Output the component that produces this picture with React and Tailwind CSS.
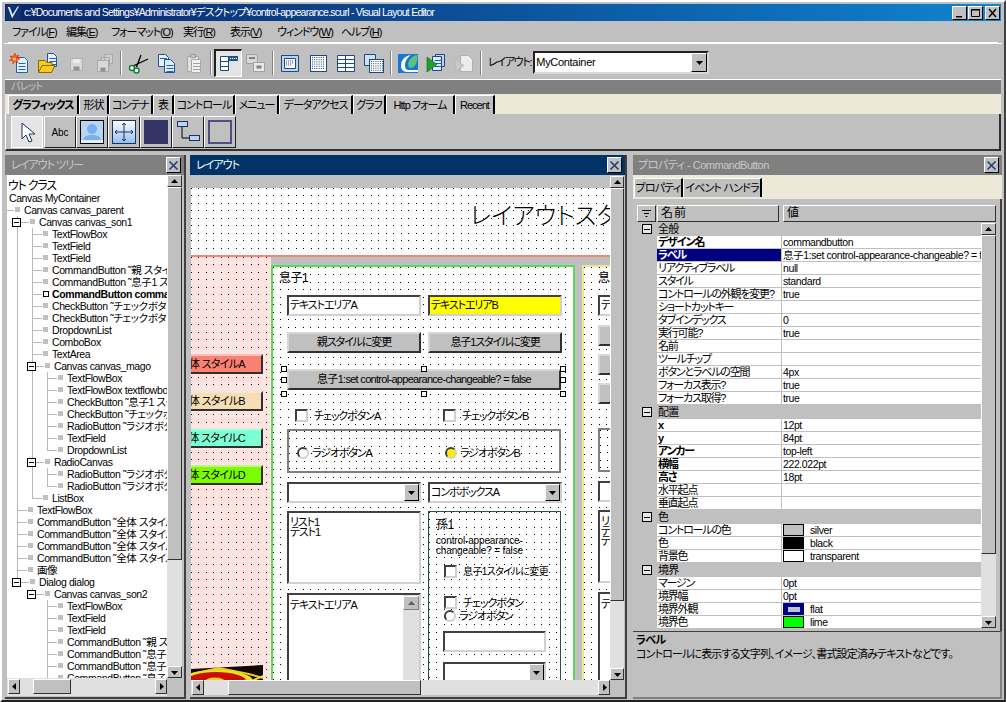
import React from 'react'

const dots = 'bg-black bg-[linear-gradient(90deg,transparent_1px,#fff_1px,#fff_7px,transparent_7px,transparent_8px,#fff_8px),linear-gradient(transparent_1px,#fff_1px,#fff_7px,transparent_7px,transparent_8px,#fff_8px)] [background-size:15px_15px]'
const dotsPink = 'bg-black bg-[linear-gradient(90deg,transparent_1px,#ffe4e1_1px,#ffe4e1_7px,transparent_7px,transparent_8px,#ffe4e1_8px),linear-gradient(transparent_1px,#ffe4e1_1px,#ffe4e1_7px,transparent_7px,transparent_8px,#ffe4e1_8px)] [background-size:15px_15px]'
const raised = 'border border-t-white border-l-white border-r-[#303030] border-b-[#303030] bg-[#c0c0c0]'
const sunken = 'border-2 border-t-[#404040] border-l-[#404040] border-r-[#d0d0d0] border-b-[#d0d0d0]'

function Arrow({ dir = 'down', className = 'w-[7px] h-[7px]' }) {
  const pts = { down: '0,2 7,2 3.5,6', up: '0,5 7,5 3.5,1', left: '5,0 5,7 1,3.5', right: '2,0 2,7 6,3.5' }
  return (
    <svg viewBox="0 0 7 7" className={className}>
      <polygon points={pts[dir]} fill="#000" />
    </svg>
  )
}

function ScrollBtn({ dir, className = '' }) {
  return (
    <div className={`${raised} flex items-center justify-center shrink-0 ${className}`}>
      <Arrow dir={dir} />
    </div>
  )
}

function VScroll({ thumb, track, className = '' }) {
  return (
    <div className={`flex flex-col bg-[#e0e0e0] ${className}`}>
      <ScrollBtn dir="up" className="h-[12px]" />
      <div className={`${raised} shrink-0 ${thumb}`} />
      <div className={track} />
      <ScrollBtn dir="down" className="h-[12px]" />
    </div>
  )
}

function CloseBtn() {
  return (
    <div className="w-[15px] h-[16px] bg-[#c0c0c0] border border-t-white border-l-white border-r-black border-b-black flex items-center justify-center">
      <svg viewBox="0 0 11 11" className="w-[11px] h-[11px]">
        <path d="M1.5 1.5 L9.5 9.5 M9.5 1.5 L1.5 9.5" stroke="#1f3f6f" strokeWidth="1.6" />
      </svg>
    </div>
  )
}

function CaptionBtn({ children }) {
  return (
    <div className="w-[15px] h-[14px] bg-[#c0c0c0] border border-t-white border-l-white border-r-black border-b-black flex items-center justify-center">
      <svg viewBox="0 0 11 10" className="w-[11px] h-[10px]">{children}</svg>
    </div>
  )
}

const I = ({ children, w = 22, h = 22 }) => (
  <svg viewBox="0 0 22 22" width={w} height={h} className="shrink-0">
    {children}
  </svg>
)

const docLines = (x, y, n, c = '#2060c0') =>
  Array.from({ length: n }, (_, i) => <path key={i} d={`M${x} ${y + i * 3}h7`} stroke={c} />)

const IconNew = () => (
  <I>
    <path d="M7.500 5.500h8l3 3v12h-11z" fill="#e8f2ff" stroke="#2060b0" />
    {docLines(9.500, 11.500, 3)}
    <path d="M6 1l1 3 3-1-2 3 3 1-3 1 1 3-3-2-2 3-.5-3.500L0 8.500l3-1.500L1 4l3 .5z" fill="#ff5a10" stroke="#e02000" strokeWidth=".5" />
    <circle cx="5.500" cy="7" r="1.500" fill="#ffe080" />
  </I>
)
const IconOpen = () => (
  <I>
    <path d="M10.500 1.500h6l3 3v10h-9z" fill="#e8f2ff" stroke="#2050a0" />
    {docLines(12.500, 6.500, 3)}
    <path d="M1.500 8.500h7l1.500 2h5v3h3l-3.500 7h-13z" fill="#f8c828" stroke="#906800" />
    <path d="M1.500 20.500l3.500-7h13" fill="none" stroke="#906800" />
  </I>
)
const IconSave = () => (
  <I>
    <path d="M5.500 6.500h12v12h-12z" fill="#d8d8d8" stroke="#b0b0b0" />
    <path d="M8 7h7v4H8z" fill="#ececec" />
    <path d="M8.500 14.500h6v4h-6z" fill="#909090" />
  </I>
)
const IconSaveAll = () => (
  <I>
    <path d="M11.500 2.500h8v9h-8zM8.500 5.500h8v9h-8z" fill="#d0d0d0" stroke="#a8a8a8" />
    <path d="M4.500 8.500h11v11h-11z" fill="#d8d8d8" stroke="#a8a8a8" />
    <path d="M7.500 15.500h5v4h-5z" fill="#909090" />
  </I>
)
const IconCut = () => (
  <I>
    <path d="M21 7L6 14M14 3L9.500 15" stroke="#000" strokeWidth="1.300" fill="none" />
    <circle cx="5" cy="16" r="2.500" fill="#fff" stroke="#108030" strokeWidth="1.400" />
    <circle cx="9.500" cy="18.500" r="2.500" fill="#fff" stroke="#108030" strokeWidth="1.400" />
  </I>
)
const IconCopy = () => (
  <I>
    <path d="M3.500 2.500h7l3 3v9h-10z" fill="#e8f2ff" stroke="#2050a0" />
    <path d="M9.500 7.500h6l4 4v9h-10z" fill="#e0ecff" stroke="#2050a0" />
    {docLines(11.500, 13.500, 3)}
    {docLines(5, 6.500, 1)}
  </I>
)
const IconPaste = () => (
  <I>
    <path d="M4.500 4.500h11v15h-11z" fill="#e0e0e0" stroke="#a8a8a8" />
    <path d="M7.500 2.500h5v3h-5z" fill="#c8c8c8" stroke="#989898" />
    <path d="M8.500 7.500h9v13h-9z" fill="#f0f0f0" stroke="#a8a8a8" />
    {docLines(10, 11.500, 3, '#a0a0a0')}
  </I>
)
const IconOutline = () => (
  <I>
    <path d="M2.500 4.500h8v14h-8z" fill="#fff" stroke="#204880" />
    <path d="M2.500 9.500h8M2.500 14.500h8" stroke="#204880" />
    <path d="M10.500 4.500h9v4h-9z" fill="#2060a0" stroke="#204880" />
    <path d="M12 6.500h1M14 6.500h1M16 6.500h1M18 6.500h1" stroke="#fff" />
  </I>
)
const IconBoxes = () => (
  <I>
    <path d="M1.500 2.500h11v9h-11z" fill="#d8d8d8" stroke="#a0a0a0" />
    <path d="M4 5h6v2H4z" fill="#808080" />
    <path d="M8.500 10.500h11v9h-11z" fill="#e8e8e8" stroke="#a0a0a0" />
    <path d="M11.500 13.500h5v3h-5z" fill="#808080" />
  </I>
)
const Grid = ({ x = 3, y = 3, w = 16, h = 16 }) => {
  const out = []
  for (let i = 0; i < 6; i++) for (let j = 0; j < 6; j++) out.push(<rect key={`${i}${j}`} x={x + 2 + i * 2.200} y={y + 2 + j * 2.200} width="1" height="1" fill="#204880" />)
  return (
    <>
      <rect x={x + 0.500} y={y + 0.500} width={w} height={h} fill="#fff" stroke="#204880" />
      {out}
    </>
  )
}
const IconPanel = () => (
  <I>
    <path d="M2.500 3.500h17v16h-17z" fill="#b8d4f0" stroke="#204880" />
    <path d="M5.500 6.500h11v10h-11z" fill="#fff" stroke="#204880" />
    <path d="M7 9h8M7 11h8M7 13h5" stroke="#204880" strokeDasharray="1 1" />
  </I>
)
const IconDots = () => <I><Grid /></I>
const IconTable = () => (
  <I>
    <path d="M2.500 3.500h17v16h-17z" fill="#fff" stroke="#204880" />
    <path d="M2.500 7.500h17M2.500 11.500h17M2.500 15.500h17M10.500 3.500v16" stroke="#204880" />
  </I>
)
const IconOverlap = () => (
  <I>
    <path d="M1.500 2.500h11v11h-11z" fill="#cfe0f8" stroke="#204880" />
    <Grid x={6} y={7} w={14} h={13} />
  </I>
)
const IconCurl = () => (
  <I>
    <path d="M1 2h20v19H1z" fill="#1878d0" />
    <path d="M14 3C7 4 4 9 4 14c0 4 3 6 7 6h10v-2H12c-3 0-4-2-4-5 0-4 3-8 6-10z" fill="#fff" />
    <path d="M20.500 3c0 6-1 12-7 13-3-1-3-5-1-8 2-3 5-5 8-5z" fill="#60c080" />
  </I>
)
const IconRun = () => (
  <I>
    <path d="M10.500 2.500h9v12h-9z" fill="#b8d4f0" stroke="#204880" />
    <path d="M7.500 4.500h9v14h-9z" fill="#e0ecff" stroke="#204880" />
    {docLines(9.500, 8.500, 3)}
    <path d="M2 5l10 7.500L2 20z" fill="#20a030" stroke="#106010" strokeWidth=".6" />
  </I>
)
const IconRunOff = () => (
  <I>
    <path d="M7.500 3.500h8l4 4v12h-12z" fill="#ececec" stroke="#b0b0b0" />
    <path d="M2 7l9 6.500L2 20z" fill="#c8c8c8" stroke="#b0b0b0" strokeWidth=".6" />
  </I>
)

const Sep = () => <div className="w-[2px] h-[24px] border-l border-l-[#808080] border-r border-r-white mx-[2px] shrink-0" />
const ToolBtn = ({ children, on }) => (
  <div className={`w-[28px] h-[28px] flex items-center justify-center shrink-0 ${on ? 'border-t-2 border-l-2 border-t-[#202020] border-l-[#202020] border-r border-b border-r-white border-b-white bg-[#e4e4e4]' : ''}`}>
    {children}
  </div>
)

const menus = [
  ['ファイル', 'F', 54],
  ['編集', 'E', 45],
  ['フォーマット', 'O', 72],
  ['実行', 'R', 47],
  ['表示', 'V', 47],
  ['ウィンドウ', 'W', 64],
  ['ヘルプ', 'H', 50],
]

const paletteTabs = [
  ['グラフィックス', 71, true],
  ['形状', 30],
  ['コンテナ', 44],
  ['表', 21],
  ['コントロール', 61],
  ['メニュー', 44],
  ['データアクセス', 74],
  ['グラフ', 33],
  ['Http フォーム', 69],
  ['Recent', 40],
]

function PaletteButtons() {
  const cell = 'w-[32px] h-[32px] flex items-center justify-center border border-t-white border-l-white border-r-[#202020] border-b-[#202020] shrink-0'
  return (
    <div className="flex h-[37px] pl-[5px] pt-[2px] bg-[#c0c0c0] border-b-2 border-b-[#303030] border-r-2 border-r-[#303030] border-l border-l-white">
      <div className={`${cell} bg-[#e4e4e4] border-t-[#202020] border-l-[#202020] border-r-white border-b-white`}>
        <svg viewBox="0 0 24 24" className="w-[24px] h-[24px]">
          <path d="M7 3v16l4-4 3 7 3-1-3-7h6z" fill="#fff" stroke="#203060" />
        </svg>
      </div>
      <div className={`${cell} bg-[#c0c0c0] text-[10px] ml-[1px]`}>Abc</div>
      <div className={`${cell} bg-[#c0c0c0]`}>
        <svg viewBox="0 0 24 24" className="w-[24px] h-[24px]">
          <rect x=".5" y=".5" width="23" height="23" fill="#b8d4f4" stroke="#000" />
          <circle cx="12" cy="9" r="5" fill="#78aeec" />
          <path d="M3 20c2-5 6-5 9-5s7 0 9 5z" fill="#78aeec" />
          <rect x="1" y="20" width="22" height="3" fill="#e0f0ff" />
        </svg>
      </div>
      <div className={`${cell} bg-[#c0c0c0]`}>
        <svg viewBox="0 0 24 24" className="w-[24px] h-[24px]">
          <defs>
            <linearGradient id="lg" x1="0" y1="0" x2="0" y2="1">
              <stop offset="0" stopColor="#fff" />
              <stop offset="1" stopColor="#90c0f0" />
            </linearGradient>
          </defs>
          <rect x=".5" y=".5" width="23" height="23" fill="url(#lg)" stroke="#203060" />
          <path d="M12 3v18M3 12h18M12 3l-2 2M12 3l2 2M12 21l-2-2M12 21l2-2M3 12l2-2M3 12l2 2M21 12l-2-2M21 12l-2 2" stroke="#203060" fill="none" />
        </svg>
      </div>
      <div className={`${cell} bg-[#c0c0c0]`}>
        <div className="w-[24px] h-[24px] bg-[#333366]" />
      </div>
      <div className={`${cell} bg-[#c0c0c0]`}>
        <svg viewBox="0 0 24 24" className="w-[24px] h-[24px]">
          <path d="M6 6v12h8" fill="none" stroke="#000" />
          <rect x="1.500" y="1.500" width="10" height="5" fill="#b8d4f4" stroke="#203060" />
          <rect x="13.500" y="15.500" width="10" height="5" fill="#b8d4f4" stroke="#203060" />
        </svg>
      </div>
      <div className={`${cell} bg-[#c0c0c0]`}>
        <div className="w-[24px] h-[24px] border-2 border-[#505080] bg-[#c0c0c0]" />
      </div>
    </div>
  )
}

const rows = [
  [0, 'Canvas canvas_parent', 'f'],
  [1, 'Canvas canvas_son1', 'F'],
  [2, 'TextFlowBox'],
  [2, 'TextField'],
  [2, 'TextField'],
  [2, 'CommandButton ˜親 スタイルに変更'],
  [2, 'CommandButton ˜息子1 スタイルに変更'],
  [2, 'CommandButton commandbutton', 'b'],
  [2, 'CheckButton ˜チェックボタンA'],
  [2, 'CheckButton ˜チェックボタンB'],
  [2, 'DropdownList'],
  [2, 'ComboBox'],
  [2, 'TextArea'],
  [2, 'Canvas canvas_mago', 'F'],
  [3, 'TextFlowBox'],
  [3, 'TextFlowBox textflowbox'],
  [3, 'CheckButton ˜息子1 スタイル'],
  [3, 'CheckButton ˜チェックボタン'],
  [3, 'RadioButton ˜ラジオボタン'],
  [3, 'TextField'],
  [3, 'DropdownList'],
  [2, 'RadioCanvas', 'F'],
  [3, 'RadioButton ˜ラジオボタンA'],
  [3, 'RadioButton ˜ラジオボタンB'],
  [2, 'ListBox'],
  [1, 'TextFlowBox'],
  [1, 'CommandButton ˜全体 スタイルA'],
  [1, 'CommandButton ˜全体 スタイルB'],
  [1, 'CommandButton ˜全体 スタイルC'],
  [1, 'CommandButton ˜全体 スタイルD'],
  [1, '画像'],
  [1, 'Dialog dialog', 'F'],
  [2, 'Canvas canvas_son2', 'F'],
  [3, 'TextFlowBox'],
  [3, 'TextField'],
  [3, 'TextField'],
  [3, 'CommandButton ˜親 スタイル'],
  [3, 'CommandButton ˜息子2 スタイル'],
  [3, 'CommandButton ˜息子2 set'],
  [3, 'CommandButton ˜息子2 set'],
]

function continues(i, k) {
  for (let j = i + 1; j < rows.length; j++) {
    if (rows[j][0] <= k) return rows[j][0] === k
  }
  return k === 3
}

function TreeRow({ i }) {
  const [d, text, kind] = rows[i]
  const folder = kind === 'F' || kind === 'f'
  const bold = kind === 'b'
  const sq = 15 * d + 6 + (folder ? 2 : 0)
  const lx = d === 0 ? 0 : 15 * d - 5
  const lines = []
  for (let k = 1; k < d; k++) {
    if (continues(i, k)) lines.push(<span key={k} className="absolute top-0 h-[12px] w-px bg-[#b8b8b8]" style={{ left: 15 * k - 5 }} />)
  }
  return (
    <div className={`relative h-[12px] leading-[12px] whitespace-nowrap ${bold ? 'font-bold' : ''}`} style={{ paddingLeft: sq + 9 }}>
      {lines}
      {d > 0 && <span className={`absolute top-0 w-px bg-[#b8b8b8] ${continues(i, d) ? 'h-[12px]' : 'h-[6px]'}`} style={{ left: lx }} />}
      <span className="absolute top-[6px] h-px bg-[#b8b8b8]" style={{ left: lx, width: sq - lx - 1 }} />
      {kind === 'F' && (
        <span className="absolute top-[2px] w-[9px] h-[9px] border border-black bg-white flex items-center justify-center" style={{ left: lx - 5 }}>
          <span className="w-[5px] h-px bg-black" />
        </span>
      )}
      <span className={`absolute top-[3px] ${bold ? 'w-[6px] h-[6px] border border-black bg-white' : 'w-[5px] h-[5px] bg-[#c0c0c0]'}`} style={{ left: sq }} />
      {text}
    </div>
  )
}

function TreePanel() {
  return (
    <div className="w-[181px] flex flex-col shrink-0 border-r-2 border-r-[#404040] border-b-2 border-b-[#404040]">
      <div className="h-[20px] bg-[#808080] text-[#c8c8c8] flex items-center justify-between pl-[6px] pr-[3px] text-[11px] tracking-[-1px]">
        <span>レイアウト ツリー</span>
        <CloseBtn />
      </div>
      <div className="flex-1 flex flex-col pl-[2px] pr-[1px] pb-[1px] min-h-0">
        <div className="flex flex-1 min-h-0">
          <div className="w-[160px] bg-white overflow-hidden pt-[5px] text-[10.5px] tracking-[-0.4px]">
            <div className="h-[12px] leading-[12px] text-[12px] tracking-[-1.2px] pl-[1px]">ウト クラス</div>
            <div className="h-[12px] leading-[12px] pl-[2px]">Canvas MyContainer</div>
            {rows.map((_, i) => (
              <TreeRow key={i} i={i} />
            ))}
          </div>
          <VScroll className="w-[15px]" thumb="h-[373px]" track="flex-1" />
        </div>
        <div className="flex h-[18px] items-stretch">
          <div className="w-[160px] flex bg-[#e0e0e0] pt-[1px] pb-[2px]">
            <ScrollBtn dir="left" className="w-[12px] ml-[1px]" />
            <div className="w-[13px]" />
            <div className={`${raised} w-[38px]`} />
            <div className="flex-1" />
            <ScrollBtn dir="right" className="w-[12px]" />
          </div>
          <div className="w-[15px] bg-[#c0c0c0]" />
        </div>
      </div>
    </div>
  )
}

const TextBox = ({ w = 'w-[134px]', h = 'h-[21px]', bg = 'bg-white', lead = 'leading-[17px]', children, className = '' }) => (
  <div className={`${w} ${h} ${bg} ${lead} ${sunken} shrink-0 overflow-hidden pl-[1px] whitespace-nowrap ${className}`}>{children}</div>
)

const Btn = ({ w = 'w-[134px]', children, className = '' }) => (
  <div className={`${w} h-[21px] shrink-0 bg-[#c0c0c0] border-2 border-t-[#d8d8d8] border-l-[#d8d8d8] border-r-[#303030] border-b-[#303030] flex items-center justify-center whitespace-nowrap ${className}`}>
    {children}
  </div>
)

const Check = ({ label, className = '' }) => (
  <div className={`flex items-center h-[13px] ${className}`}>
    <span className={`w-[13px] h-[13px] bg-white ${sunken} shrink-0`} />
    <span className="ml-[6px] whitespace-nowrap leading-[12px]">{label}</span>
  </div>
)

const Radio = ({ label, on, className = '' }) => (
  <div className={`flex items-center h-[12px] ${className}`}>
    <span className={`w-[12px] h-[12px] rounded-full border-2 border-t-[#404040] border-l-[#404040] border-r-[#d0d0d0] border-b-[#d0d0d0] shrink-0 ${on ? 'bg-[#ffee00]' : 'bg-white'}`} />
    <span className="ml-[3px] whitespace-nowrap leading-[12px]">{label}</span>
  </div>
)

const Drop = ({ w = 'w-[134px]', h = 'h-[21px]', className = '', children }) => (
  <div className={`${w} ${h} bg-white ${sunken} shrink-0 flex items-stretch pl-[1px] leading-[17px] whitespace-nowrap overflow-hidden ${className}`}>
    <span className="flex-1">{children}</span>
    <div className="w-[15px] bg-[#c0c0c0] border border-t-white border-l-white border-r-black border-b-black flex items-center justify-center">
      <Arrow />
    </div>
  </div>
)

const Handle = ({ className }) => <span className={`absolute w-[6px] h-[6px] bg-white border border-black ${className}`} />

function Son1() {
  return (
    <div className={`w-[304px] h-[500px] shrink-0 mt-[8px] border-2 border-[#5cd85c] ${dots} text-[11px] tracking-[-1.1px]`}>
      <div className="h-[14px] mt-[4px] ml-[6px] text-[12px] leading-[14px] tracking-[-0.5px]">息子1</div>
      <div className="ml-[14px] w-[274px]">
        <div className="flex gap-[7px] mt-[10px]">
          <TextBox>テキストエリアA</TextBox>
          <TextBox bg="bg-[#ffff00]">テキストエリアB</TextBox>
        </div>
        <div className="flex gap-[7px] mt-[16px]">
          <Btn>親スタイルに変更</Btn>
          <Btn>息子1スタイルに変更</Btn>
        </div>
        <div className="relative mt-[16px]">
          <Btn w="w-[274px]" className="tracking-[-0.7px]">息子1:set control-appearance-changeable? = false</Btn>
          <Handle className="-left-[6px] -top-[3px]" />
          <Handle className="left-[134px] -top-[3px]" />
          <Handle className="-right-[5px] -top-[3px]" />
          <Handle className="-left-[6px] top-[8px]" />
          <Handle className="-right-[5px] top-[8px]" />
          <Handle className="-left-[6px] top-[22px]" />
          <Handle className="left-[134px] top-[22px]" />
          <Handle className="-right-[5px] top-[22px]" />
        </div>
        <div className="flex mt-[19px] h-[13px]">
          <Check label="チェックボタンA" className="ml-[8px] w-[148px]" />
          <Check label="チェックボタンB" />
        </div>
        <div className={`mt-[7px] h-[44px] w-[274px] border-2 border-[#808080] ${dots} flex items-center pl-[8px] pt-[3px]`}>
          <Radio label="ラジオボタンA" className="w-[148px]" />
          <Radio label="ラジオボタンB" on />
        </div>
        <div className="flex gap-[7px] mt-[9px]">
          <Drop />
          <Drop>コンボボックスA</Drop>
        </div>
        <div className="flex gap-[7px] mt-[8px]">
          <div className="w-[134px]">
            <TextBox h="h-[73px]" lead="leading-[10px]" className="pt-[4px]">
              リスト1
              <br />
              テスト1
            </TextBox>
            <div className={`mt-[9px] h-[100px] bg-white ${sunken} flex justify-between pl-[1px]`}>
              <span className="pt-[2px]">テキストエリアA</span>
              <div className="w-[16px] bg-[#e0e0e0] flex flex-col">
                <div className="h-[14px] mt-[1px] bg-[#c0c0c0] border border-t-white border-l-white border-r-[#808080] border-b-[#808080] flex items-center justify-center">
                  <Arrow dir="up" className="w-[7px] h-[7px] opacity-50" />
                </div>
              </div>
            </div>
          </div>
          <div className={`w-[134px] h-[180px] border border-[#2f4f4f] ${dots} pl-[7px]`}>
            <div className="mt-[6px] h-[14px] leading-[14px] text-[12px] tracking-[-0.5px]">孫1</div>
            <div className="mt-[4px] leading-[10px] text-[10px] tracking-[-0.15px]">
              control-appearance-
              <br />
              changeable? = false
            </div>
            <Check label="息子1スタイルに変更" className="mt-[9px] ml-[8px] text-[10px] tracking-[-0.6px]" />
            <Check label="チェックボタン" className="mt-[18px] ml-[8px]" />
            <Radio label="ラジオボタン" className="mt-[1px] ml-[8px]" />
            <TextBox w="w-[103px]" className="mt-[9px] ml-[7px]" />
            <Drop w="w-[103px]" className="mt-[10px] ml-[7px]" />
          </div>
        </div>
      </div>
    </div>
  )
}

function Son2() {
  return (
    <div className={`w-[304px] h-[500px] shrink-0 mt-[8px] ml-[7px] border-2 border-[#f0e68c] ${dots} text-[11px] tracking-[-1.1px] pl-[14px]`}>
      <div className="h-[14px] mt-[4px] text-[12px] leading-[14px] tracking-[-0.5px]">息子2</div>
      <TextBox className="mt-[10px]">テキストエリアA</TextBox>
      <Btn className="mt-[9px]">親スタイル</Btn>
      <Btn className="mt-[8px]">息子2</Btn>
      <Btn className="mt-[8px]">息子2</Btn>
      <div className={`mt-[24px] h-[44px] w-[274px] border-2 border-[#808080] ${dots}`} />
      <Drop className="mt-[9px]" />
      <TextBox h="h-[73px]" lead="leading-[10px]" className="mt-[8px] pt-[4px]">
        リスト1
        <br />
        テスト1
        <br />
        テスト2
      </TextBox>
      <TextBox h="h-[100px]" className="mt-[9px] pt-[2px]">テキストエリアA</TextBox>
    </div>
  )
}

const StyleBtn = ({ bg, text, className }) => (
  <div className={`w-[90px] -ml-[18px] h-[20px] ${bg} border-2 border-t-[#f0f0f0]/60 border-l-[#f0f0f0]/60 border-r-[#303030] border-b-[#303030] flex items-center justify-end pr-[16px] whitespace-nowrap ${className}`}>
    {text}
  </div>
)

function DesignCanvas() {
  return (
    <div className="w-[419px] h-[492px] overflow-hidden shrink-0">
      <div className={`h-[67px] ${dots} pl-[279px] pt-[14px] text-[24px] font-light leading-[28px] whitespace-nowrap`}>レイアウトスタイル</div>
      <div className="h-[2px] bg-[#f08878]" />
      <div className="flex">
        <div className={`w-[80px] h-[500px] shrink-0 ${dotsPink} overflow-hidden text-[11px] tracking-[-0.7px]`}>
          <StyleBtn bg="bg-[#fa8072]" text="全体 スタイルA" className="mt-[97px]" />
          <StyleBtn bg="bg-[#f5deb3]" text="全体 スタイルB" className="mt-[17px]" />
          <StyleBtn bg="bg-[#7fffd4]" text="全体 スタイルC" className="mt-[17px]" />
          <StyleBtn bg="bg-[#7cfc00]" text="全体 スタイルD" className="mt-[17px]" />
          <svg viewBox="0 0 72 16" className="w-[72px] h-[16px] mt-[180px] block">
            <path d="M0 4L72 0V16H0z" fill="#100800" />
            <path d="M0 8L28 2l30 6 14 4v2L50 8 24 5 0 10z" fill="#e8d020" />
            <path d="M58 16l14-6v2l-9 4z" fill="#f8e020" />
            <ellipse cx="26" cy="16" rx="36" ry="11" fill="#f0e020" />
            <ellipse cx="25" cy="16" rx="30" ry="9" fill="#c81000" />
            <ellipse cx="24" cy="16.500" rx="10" ry="4" fill="#f0d020" />
          </svg>
        </div>
        <Son1 />
        <Son2 />
      </div>
    </div>
  )
}

function LayoutPanel() {
  return (
    <div className="w-[437px] ml-[4px] flex flex-col shrink-0 border-r-2 border-r-[#404040] border-b-2 border-b-[#404040]">
      <div className="h-[20px] bg-[#003366] text-white flex items-center justify-between pl-[6px] pr-[3px] text-[11px] tracking-[-1px]">
        <span>レイアウト</span>
        <CloseBtn />
      </div>
      <div className="flex flex-1 min-h-0">
        <div className="w-[420px] flex flex-col pl-px">
          <div className="h-[13px] bg-[#c0c0c0] shrink-0" />
          <DesignCanvas />
          <div className="flex h-[15px] bg-[#e0e0e0]">
            <ScrollBtn dir="left" className="w-[12px] ml-px" />
            <div className="w-[24px]" />
            <div className={`${raised} w-[193px]`} />
            <div className="flex-1" />
            <ScrollBtn dir="right" className="w-[12px]" />
          </div>
        </div>
        <div className="flex-1 flex flex-col">
          <VScroll className="w-[14px] h-[504px] mt-px" thumb="h-[413px]" track="flex-1" />
          <div className="flex-1 bg-[#c0c0c0]" />
        </div>
      </div>
    </div>
  )
}

const groups = [
  ['全般', [
    ['デザイン名', 'commandbutton', 'b'],
    ['ラベル', '息子1:set control-appearance-changeable? = false', 's'],
    ['リアクティブラベル', 'null'],
    ['スタイル', 'standard'],
    ['コントロールの外観を変更?', 'true'],
    ['ショートカットキー', ''],
    ['タブインデックス', '0'],
    ['実行可能?', 'true'],
    ['名前', ''],
    ['ツールチップ', ''],
    ['ボタンとラベルの空間', '4px'],
    ['フォーカス表示?', 'true'],
    ['フォーカス取得?', 'true'],
  ]],
  ['配置', [
    ['x', '12pt', 'b'],
    ['y', '84pt', 'b'],
    ['アンカー', 'top-left', 'b'],
    ['横幅', '222.022pt', 'b'],
    ['高さ', '18pt', 'b'],
    ['水平起点', ''],
    ['垂直起点', ''],
  ]],
  ['色', [
    ['コントロールの色', 'silver', '', 'bg-[#c0c0c0] border border-black'],
    ['色', 'black', '', 'bg-black'],
    ['背景色', 'transparent', '', 'bg-white border border-black'],
  ]],
  ['境界', [
    ['マージン', '0pt'],
    ['境界幅', '0pt'],
    ['境界外観', 'flat', '', 'flat'],
    ['境界色', 'lime', '', 'bg-[#00ff00] border border-black'],
  ]],
]

function Swatch({ kind }) {
  if (kind === 'flat') {
    return (
      <span className="w-[21px] h-[13px] bg-[#000080] flex items-center justify-center shrink-0">
        <span className="w-[12px] h-[5px] bg-[#c0c0d8]" />
      </span>
    )
  }
  return <span className={`w-[21px] h-[12px] shrink-0 ${kind}`} />
}

function PropRow({ label, value, kind, swatch }) {
  const sel = kind === 's'
  return (
    <div className="flex h-[13px] leading-[13px] whitespace-nowrap">
      <div className={`w-[124px] overflow-hidden border-b border-b-[#c0c0c0] pl-px h-[13px] shrink-0 tracking-[-1.2px] ${kind === 'b' ? 'font-bold' : ''} ${sel ? 'bg-[#000080] text-white font-bold' : 'bg-white'}`}>
        {label}
      </div>
      <div className="flex-1 min-w-0 overflow-hidden bg-white border-b border-b-[#c0c0c0] border-l border-l-[#c0c0c0] pl-px flex items-center text-[10.5px] tracking-[-0.4px]">
        {swatch ? <Swatch kind={swatch} /> : null}
        <span className={swatch ? 'ml-[6px]' : ''}>{value}</span>
      </div>
    </div>
  )
}

function PropGroup({ name, items }) {
  return (
    <div>
      <div className="h-[14px] bg-[#c0c0c0] flex items-center pl-[5px]">
        <span className="w-[10px] h-[10px] border border-black bg-[#e8e8e8] flex items-center justify-center mr-[6px]">
          <span className="w-[6px] h-px bg-black" />
        </span>
        <span className="tracking-[-0.8px]">{name}</span>
      </div>
      <div className="pl-[20px]">
        {items.map(([l, v, k, s]) => (
          <PropRow key={l} label={l} value={v} kind={k} swatch={s} />
        ))}
      </div>
    </div>
  )
}

function PropPanel() {
  return (
    <div className="flex-1 ml-[6px] flex flex-col min-w-0">
      <div className="h-[20px] bg-[#808080] text-[#c8c8c8] flex items-center justify-between pl-[5px] pr-[3px] text-[11px] shrink-0">
        <span className="tracking-[-0.5px]">プロパティ - CommandButton</span>
        <CloseBtn />
      </div>
      <div className="h-[24px] bg-[#ece9d8] flex items-end pl-[1px] text-[11px] tracking-[-0.8px] shrink-0 pb-[2px] whitespace-nowrap">
        <div className="w-[49px] h-[19px] bg-[#c0c0c0] border-t border-l border-t-white border-l-white border-r-2 border-r-black flex items-center justify-center">プロパティ</div>
        <div className="w-[79px] h-[19px] bg-[#c0c0c0] border-t border-l border-t-white border-l-white border-r-2 border-r-black flex items-center justify-center">イベント ハンドラ</div>
      </div>
      <div className="h-[432px] bg-[#c0c0c0] pl-[4px] pt-[6px] border-r-2 border-r-[#404040] text-[11px] shrink-0">
        <div className="flex h-[17px] w-[359px]">
          <div className={`${raised} w-[19px] flex items-center justify-center mr-px`}>
            <svg viewBox="0 0 9 7" className="w-[9px] h-[7px]">
              <path d="M0 .5h9M2 3.500h5M3.500 6.500h2" stroke="#000" />
            </svg>
          </div>
          <div className={`${raised} w-[122px] pl-[3px] text-[12px] leading-[15px] tracking-[1px]`}>名前</div>
          <div className="w-[4px]" />
          <div className={`${raised} flex-1 pl-[3px] text-[12px] leading-[15px]`}>値</div>
        </div>
        <div className="flex">
          <div className="w-[344px] overflow-hidden">
            {groups.map(([n, items]) => (
              <PropGroup key={n} name={n} items={items} />
            ))}
          </div>
          <VScroll className="w-[15px] h-[405px] mt-px" thumb="h-[319px]" track="flex-1" />
        </div>
      </div>
      <div className="flex-1 bg-[#c0c0c0] border-t border-t-[#404040] border-b-2 border-b-[#808080] border-r-2 border-r-[#808080] pl-[3px] pt-[2px] text-[11px]">
        <div className="font-bold h-[13px] leading-[13px] tracking-[-0.8px]">ラベル</div>
        <div className="mt-px h-[13px] leading-[13px] tracking-[-0.85px] whitespace-nowrap">コントロールに表示する文字列、イメージ、書式設定済みテキストなどです。</div>
      </div>
    </div>
  )
}

export default function App() {
  return (
    <div lang="ja" className="w-[1006px] h-[702px] flex flex-col overflow-hidden bg-[#c0c0c0] text-black text-[11px] [font-family:'Liberation_Sans','Noto_Sans_CJK_JP',sans-serif] [font-feature-settings:'palt'] border-t-2 border-l-2 border-t-white border-l-white border-r-2 border-r-[#404040] border-b-2 border-b-[#202020] p-[2px] pb-[1px]">
      {/* title bar */}
      <div className="h-[17px] shrink-0 flex items-center bg-gradient-to-r from-[#0a246a] to-[#1084d0] ml-[1px] mr-[1px]">
        <svg viewBox="0 0 16 16" className="w-[15px] h-[15px] ml-[1px] shrink-0">
          <rect width="16" height="16" fill="#103070" />
          <path d="M2 2l4.500 12L14 1l-2 1-5 8L4 2z" fill="#e8f8f0" />
        </svg>
        <span className="ml-[3px] text-white text-[10.5px] tracking-[-0.75px] whitespace-nowrap">c:¥Documents and Settings¥Administrator¥デスクトップ¥control-appearance.scurl - Visual Layout Editor</span>
        <div className="ml-auto flex items-center mr-[1px]">
          <CaptionBtn>
            <path d="M2 8h6v1.500H2z" />
          </CaptionBtn>
          <div className="w-px" />
          <CaptionBtn>
            <path d="M1.500 1.500h8v7h-8zM1 2h9" fill="none" stroke="#000" />
          </CaptionBtn>
          <div className="w-[2px]" />
          <CaptionBtn>
            <path d="M2 1l7 8M9 1l-7 8" stroke="#000" strokeWidth="1.500" />
          </CaptionBtn>
        </div>
      </div>

      {/* menu */}
      <div className="h-[22px] shrink-0 flex items-center pl-[4px] pt-[2px] border-b border-b-white mx-[4px] -mb-px text-[11px] tracking-[-1.1px]">
        {menus.map(([t, k, w]) => (
          <div key={t} className="whitespace-nowrap shrink-0" style={{ width: w }}>
            {t}(<u>{k}</u>)
          </div>
        ))}
      </div>

      {/* toolbar */}
      <div className="h-[36px] shrink-0 flex items-center pl-[2px] pt-[2px] border-t border-t-white mt-px">
        <ToolBtn><IconNew /></ToolBtn>
        <ToolBtn><IconOpen /></ToolBtn>
        <ToolBtn><IconSave /></ToolBtn>
        <ToolBtn><IconSaveAll /></ToolBtn>
        <Sep />
        <ToolBtn><IconCut /></ToolBtn>
        <ToolBtn><IconCopy /></ToolBtn>
        <ToolBtn><IconPaste /></ToolBtn>
        <Sep />
        <ToolBtn on><IconOutline /></ToolBtn>
        <ToolBtn><IconBoxes /></ToolBtn>
        <Sep />
        <ToolBtn><IconPanel /></ToolBtn>
        <ToolBtn><IconDots /></ToolBtn>
        <ToolBtn><IconTable /></ToolBtn>
        <ToolBtn><IconOverlap /></ToolBtn>
        <Sep />
        <ToolBtn><IconCurl /></ToolBtn>
        <ToolBtn><IconRun /></ToolBtn>
        <ToolBtn><IconRunOff /></ToolBtn>
        <Sep />
        <span className="ml-[4px] whitespace-nowrap tracking-[-1.3px]">レイアウト:</span>
        <div className="ml-[2px] w-[176px] h-[23px] bg-white border-2 border-t-[#202020] border-l-[#202020] border-r-[#d8d8d8] border-b-[#d8d8d8] flex items-stretch">
          <span className="flex-1 pl-px leading-[19px] tracking-[-0.3px]">MyContainer</span>
          <div className="w-[16px] bg-[#c0c0c0] border border-t-white border-l-white border-r-black border-b-black flex items-center justify-center">
            <Arrow />
          </div>
        </div>
      </div>

      {/* palette */}
      <div className="shrink-0 ml-[1px] mr-[1px] border-t border-t-white">
        <div className="h-[14px] bg-[#808080] text-[#c8c8c8] pl-[6px] text-[10px] tracking-[-0.5px] leading-[14px]">パレット</div>
        <div className="h-[20px] bg-[#ece9d8] flex items-end pl-[3px] text-[11px] tracking-[-1px]">
          {paletteTabs.map(([t, w, on]) => (
            <div key={t} className={`h-[19px] bg-[#c0c0c0] border-t border-t-white border-l border-l-white border-r-2 border-r-black flex items-center justify-center whitespace-nowrap shrink-0 ${on ? 'font-bold' : ''}`} style={{ width: w }}>
              {t}
            </div>
          ))}
        </div>
        <PaletteButtons />
      </div>

      {/* work area */}
      <div className="flex-1 min-h-0 flex mt-[4px] pl-[1px]">
        <TreePanel />
        <LayoutPanel />
        <PropPanel />
      </div>
    </div>
  )
}
